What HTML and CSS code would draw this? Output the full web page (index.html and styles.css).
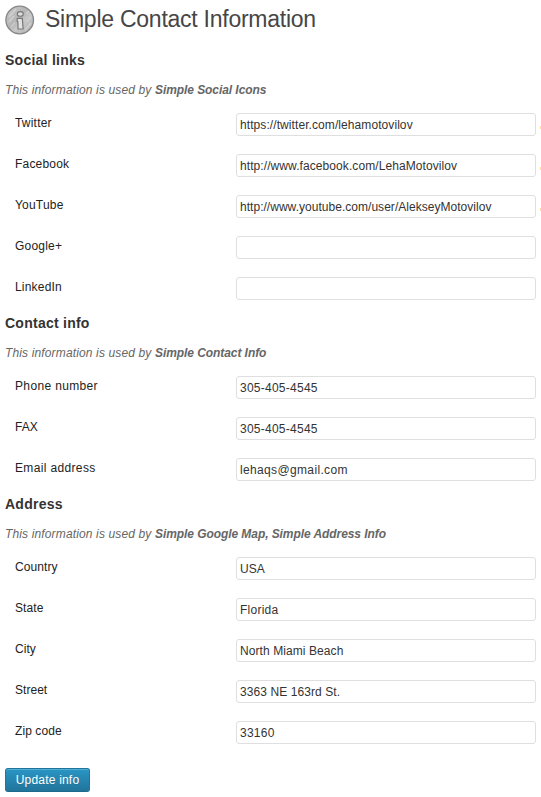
FILE: index.html
```
<!DOCTYPE html>
<html lang="en">
<head>
<meta charset="utf-8">
<title>Simple Contact Information</title>
<link rel="stylesheet" href="styles.css">
</head>
<body>
<header class="page-header">
  <svg class="info-icon" viewBox="0 0 30 30" aria-hidden="true">
    <defs><linearGradient id="disc" x1="0" y1="0" x2="1" y2="1"><stop offset="0" stop-color="#c9c9c9"/><stop offset=".45" stop-color="#b5b5b5"/><stop offset=".6" stop-color="#c8c8c8"/><stop offset="1" stop-color="#adadad"/></linearGradient></defs>
    <circle cx="14.700" cy="15" r="13.800" fill="url(#disc)" stroke="#868686" stroke-width="1.300"/>
    <path d="M4 12 11 4M4 17 9 11M20 25l6-7M21 9l3-3M6 22l4-5M22 17l4-5" fill="none" stroke="#d2d2d2" stroke-width="1.200"/>
    <ellipse cx="15.300" cy="8.900" rx="3" ry="2.300" fill="#ddd" stroke="#777" stroke-width="1.100"/>
    <path d="M12.300 13.400h5l.9 10.600h-5.200l-.1-7.400-.8-.3z" fill="#e2e2e2" stroke="#777" stroke-width="1.200" stroke-linejoin="round"/>
  </svg>
  <h1>Simple Contact Information</h1>
</header>
<form>
  <section>
    <h2>Social links</h2>
    <p class="note">This information is used by <b>Simple Social Icons</b></p>
    <div class="row"><label for="tw">Twitter</label><input id="tw" class="tight" value="https://twitter.com/lehamotovilov"><i class="tick"></i></div>
    <div class="row"><label for="fb">Facebook</label><input id="fb" class="tight" value="http://www.facebook.com/LehaMotovilov"><i class="tick"></i></div>
    <div class="row"><label for="yt">YouTube</label><input id="yt" class="tighter" value="http://www.youtube.com/user/AlekseyMotovilov"><i class="tick"></i></div>
    <div class="row"><label for="gp">Google+</label><input id="gp"></div>
    <div class="row"><label for="li">LinkedIn</label><input id="li"></div>
  </section>
  <section>
    <h2>Contact info</h2>
    <p class="note">This information is used by <b>Simple Contact Info</b></p>
    <div class="row"><label for="ph" class="wide">Phone number</label><input id="ph" value="305-405-4545"></div>
    <div class="row"><label for="fx" class="tighter">FAX</label><input id="fx" value="305-405-4545"></div>
    <div class="row"><label for="em" class="wide">Email address</label><input id="em" class="wide" value="lehaqs@gmail.com"></div>
  </section>
  <section>
    <h2>Address</h2>
    <p class="note">This information is used by <b>Simple Google Map, Simple Address Info</b></p>
    <div class="row"><label for="co" class="tight">Country</label><input id="co" class="tight" value="USA"></div>
    <div class="row"><label for="st" class="tight">State</label><input id="st" value="Florida"></div>
    <div class="row"><label for="ci" class="tighter">City</label><input id="ci" class="tight" value="North Miami Beach"></div>
    <div class="row"><label for="sr" class="tighter">Street</label><input id="sr" class="tight" value="3363 NE 163rd St."></div>
    <div class="row"><label for="zp" class="tight">Zip code</label><input id="zp" value="33160"></div>
  </section>
  <button type="button">Update info</button>
</form>
</body>
</html>
```
FILE: styles.css
```
* { box-sizing: border-box; }
body { margin: 0; background: #fff; color: #333; font: 12px/20px "Liberation Sans", Arial, sans-serif; overflow: hidden; }
.page-header { display: flex; height: 50px; padding: 5px 0 0 5px; gap: 10px; }
.info-icon { width: 30px; height: 30px; }
h1 { margin: 0; font-size: 23px; font-weight: 400; line-height: 28px; color: #464646; letter-spacing: -.25px; white-space: nowrap; }
form { padding-left: 5px; }
section { margin-bottom: 4px; }
h2 { margin: 0 0 10px; font-size: 14px; line-height: 20px; color: #333; letter-spacing: .25px; }
.note { margin: 0 0 4px; font-size: 12px; font-style: italic; line-height: 20px; color: #666; letter-spacing: .14px; white-space: nowrap; }
.note b { letter-spacing: -.07px; }
.row { display: flex; height: 41px; padding: 9px 0 0 10px; }
label { width: 221px; line-height: 20px; color: #222; letter-spacing: .2px; }
input { width: 300px; height: 23px; padding: 1px 3px 0; border: 1px solid #dfdfdf; border-radius: 3px; background: #fff; color: #333; font: inherit; line-height: 20px; letter-spacing: .25px; }
.tight { letter-spacing: .08px; }
.tighter { letter-spacing: .03px; }
.wide { letter-spacing: .35px; }
.tick { width: 1px; height: 3px; margin: 13px 0 0 4px; background: #ffdf91; }
button { display: block; width: 85px; height: 24px; margin-top: 15px; padding: 0; border: 1px solid #21759b; border-bottom-color: #1e6a8d; border-radius: 3px; background: linear-gradient(#2a95c5, #21759b); box-shadow: inset 0 1px 0 rgba(120, 200, 230, .5); color: #fff; font: 12px/22px "Liberation Sans", Arial, sans-serif; text-shadow: 0 1px 0 rgba(0, 0, 0, .1); letter-spacing: .2px; }
```
